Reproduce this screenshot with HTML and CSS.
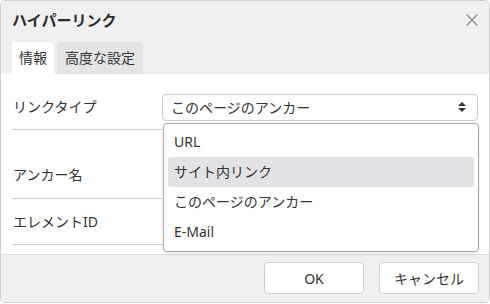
FILE: index.html
```html
<!DOCTYPE html>
<html lang="ja">

<head>
  <meta charset="UTF-8" />
  <title>ハイパーリンク</title>
  <link rel="stylesheet" href="styles.css">
</head>

<body>
  <div class="dialog">
    <div class="header">
      <div class="title-row">
        <h1>ハイパーリンク</h1>
        <button class="close" type="button" aria-label="閉じる">
          <svg width="14" height="14" viewBox="0 0 14 14">
            <path d="M1.5 1.5 L12.5 12.5 M12.5 1.5 L1.5 12.5" stroke="#9a9a9a" stroke-width="1.6" fill="none" />
          </svg>
        </button>
      </div>
      <div class="tabs">
        <div class="tab active">情報</div>
        <div class="tab">高度な設定</div>
      </div>
    </div>

    <div class="content">
      <div class="row row-type">
        <label>リンクタイプ</label>
        <div class="select-wrap">
          <div class="select">
            <span>このページのアンカー</span>
            <svg width="10" height="12" viewBox="0 0 10 12">
              <path d="M5 1 L9 5 L1 5 Z M5 11 L9 7 L1 7 Z" fill="#333" />
            </svg>
          </div>
          <ul class="dropdown">
            <li>URL</li>
            <li class="hover">サイト内リンク</li>
            <li>このページのアンカー</li>
            <li>E-Mail</li>
          </ul>
        </div>
      </div>

      <div class="row row-anchor">
        <label>アンカー名</label>
      </div>

      <div class="row row-id">
        <label>エレメントID</label>
      </div>
    </div>

    <div class="footer">
      <button class="btn" type="button">OK</button>
      <button class="btn" type="button">キャンセル</button>
    </div>
  </div>
</body>

</html>
```

FILE: styles.css
```css
* {
  margin: 0;
  padding: 0;
  box-sizing: border-box;
  font-family: 'Noto Sans', 'Noto Sans CJK JP', sans-serif;
}

body {
  width: 490px;
  height: 304px;
  color: #333;
  background: #fff;
}

.dialog {
  width: 490px;
  height: 303px;
  border: 1px solid #cfcfcf;
  border-radius: 5px;
  overflow: hidden;
  display: flex;
  flex-direction: column;
  background: #fff;
}

.header {
  background: #f0f0f0;
  padding: 0 11px;
}

.title-row {
  height: 41px;
  display: flex;
  align-items: center;
  justify-content: space-between;
}

.title-row h1 {
  font-size: 15px;
  font-weight: bold;
  line-height: 20px;
  color: #2b2b2b;
  margin-top: -3px;
}

.close {
  background: none;
  border: none;
  width: 14px;
  height: 14px;
  margin-right: -1px;
  margin-top: -3px;
  display: flex;
}

.tabs {
  display: flex;
  gap: 3px;
  height: 32px;
}

.tab {
  padding: 0 8px;
  font-size: 14px;
  line-height: 32px;
  background: #e4e4e4;
  border-radius: 4px 4px 0 0;
  color: #333;
}

.tab.active {
  background: #fff;
  padding: 0 7px;
}

.content {
  flex: 1;
  padding: 17px 11px 0;
}

.row {
  display: flex;
  align-items: center;
  border-bottom: 1px solid #cfcfcf;
}

.row label {
  width: 150px;
  font-size: 14px;
  line-height: 20px;
  padding-left: 1px;
}

.row-type {
  height: 39px;
  padding-bottom: 6px;
}

.row-anchor {
  height: 69px;
  padding-top: 21px;
}

.row-id {
  height: 46px;
}

.select-wrap {
  flex: 1;
  position: relative;
}

.select {
  height: 27px;
  border: 1px solid #cfcfcf;
  border-radius: 4px;
  display: flex;
  align-items: center;
  justify-content: space-between;
  padding: 0 10px 0 8px;
  font-size: 14px;
  background: #fff;
}

.dropdown {
  position: absolute;
  top: 29px;
  left: 1px;
  right: -1px;
  list-style: none;
  background: #fff;
  border: 1px solid #a9a9a9;
  border-radius: 4px;
  box-shadow: 0 1px 3px rgba(0, 0, 0, 0.12);
  padding: 3px 4px 4px;
  z-index: 5;
}

.dropdown li {
  height: 30px;
  line-height: 30px;
  font-size: 14px;
  padding-left: 6px;
  border-radius: 3px;
}

.dropdown li.hover {
  background: #e1e1e6;
}

.footer {
  height: 48px;
  background: #f0f0f0;
  border-top: 1px solid #dedede;
  display: flex;
  justify-content: flex-end;
  align-items: flex-start;
  gap: 15px;
  padding: 7px 10px 0;
}

.btn {
  width: 100px;
  height: 32px;
  background: #fff;
  border: 1px solid #cfcfcf;
  border-radius: 4px;
  font-size: 14px;
  color: #333;
}
```
